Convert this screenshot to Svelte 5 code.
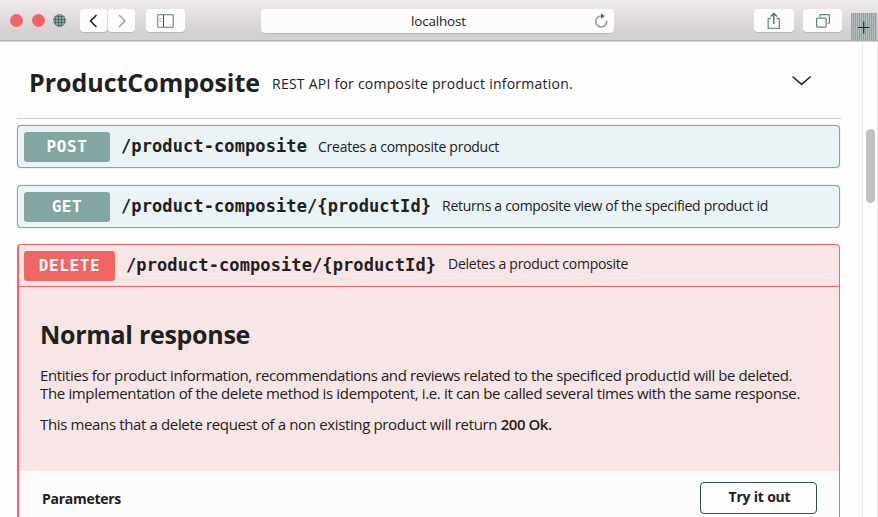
<script>
  const operations = [
    { method: 'POST', path: '/product-composite', summary: 'Creates a composite product' },
    { method: 'GET', path: '/product-composite/{productId}', summary: 'Returns a composite view of the specified product id' }
  ];
</script>

<div class="window">
  <header class="toolbar">
    <div class="lights">
      <i></i><i></i><i class="zoom"></i>
    </div>
    <div class="nav">
      <button aria-label="Back">
        <svg width="27" height="24" viewBox="0 0 27 24"><path d="M16.5 6 L10.5 12 L16.5 18" stroke="#1e2323" stroke-width="1.6" /></svg>
      </button>
      <button aria-label="Forward">
        <svg width="27" height="24" viewBox="0 0 27 24"><path d="M11 6 L17 12 L11 18" stroke="#9ca8a7" stroke-width="1.5" /></svg>
      </button>
    </div>
    <button class="sidebar" aria-label="Sidebar">
      <svg width="39" height="24" viewBox="0 0 39 24" stroke="#769b98">
        <rect x="11.7" y="5.7" width="15.6" height="12.6" rx="1" stroke-width="1.3" />
        <path d="M17.5 6 V18" stroke="#405553" />
        <path d="M13.5 9.5 H15.5 M13.5 12 H15.5" stroke="#a99fa3" />
      </svg>
    </button>
    <div class="address">
      <span>localhost</span>
      <svg width="15" height="16" viewBox="0 0 15 16">
        <path d="M12.6 7.5 A5.5 5.5 0 1 1 7.5 3" stroke="#7fa4a1" stroke-width="1.5" />
        <path d="M7 0.5 L10.7 3 L7 5.7 Z" fill="#466461" stroke="none" />
      </svg>
    </div>
    <button class="share" aria-label="Share">
      <svg width="40" height="24" viewBox="0 0 40 24" stroke="#6f9390" stroke-width="1.3">
        <path d="M17 9.5 H14.2 V19.3 H25.4 V9.5 H22.5" />
        <path d="M19.8 15 V4.5 M16.7 7.5 L19.8 4.4 L22.9 7.5" stroke="#4b6663" />
      </svg>
    </button>
    <button class="tabs" aria-label="Show tabs">
      <svg width="39" height="24" viewBox="0 0 39 24" stroke="#5f817e" stroke-width="1.2">
        <rect x="13.6" y="9.2" width="9.6" height="9" rx="1" />
        <path d="M17 7.8 V6.3 Q17 5.6 17.7 5.6 H25.6 Q26.4 5.6 26.4 6.4 V13.7 Q26.4 14.5 24.6 14.5" />
      </svg>
    </button>
    <button class="new-tab" aria-label="New tab">
      <svg width="26" height="27" viewBox="0 0 26 27"><path d="M7 14.5 H18.5 M12.7 8.5 V20.5" stroke="#1e2a29" stroke-width="1.2" /></svg>
    </button>
  </header>

  <div class="viewport">
    <main>
      <div class="tag">
        <h1>ProductComposite</h1>
        <p>REST API for composite product information.</p>
        <svg width="22" height="12" viewBox="0 0 22 12"><path d="M1.5 1.5 L10.6 9.4 L19.7 1.5" stroke="#202b2a" stroke-width="1.6" /></svg>
      </div>

      {#each operations as op}
        <section class="operation">
          <div class="summary">
            <b class="method">{op.method}</b>
            <code>{op.path}</code>
            <span class={op.method.toLowerCase()}>{op.summary}</span>
          </div>
        </section>
      {/each}

      <section class="operation danger">
        <div class="summary">
          <b class="method">DELETE</b>
          <code>{'/product-composite/{productId}'}</code>
          <span class="delete">Deletes a product composite</span>
        </div>
        <div class="description">
          <h2>Normal response</h2>
          <p>
            <span class="first">Entities for product information, recommendations and reviews related to the specificed productId will be deleted.</span><br />
            <span class="second">The implementation of the delete method is idempotent, i.e. it can be called several times with the same response.</span>
          </p>
          <p>This means that a delete request of a non existing product will return <strong>200 Ok.</strong></p>
        </div>
        <div class="parameters">
          <h3>Parameters</h3>
          <button>Try it out</button>
        </div>
      </section>
    </main>
    <aside><div class="thumb"></div></aside>
  </div>
</div>

<style>
  * { box-sizing: border-box; margin: 0; }
  button { border: 0; padding: 0; font: inherit; color: inherit; background: #fdfdfd; }
  svg { display: block; fill: none; flex: none; }
  .window {
    height: 517px; overflow: hidden; display: flex; flex-direction: column;
    background: #fdfdfd; color: #1f2020; font-family: "Open Sans", "Noto Sans", sans-serif;
    white-space: nowrap;
  }
  .toolbar {
    height: 42px; flex: none; display: flex; align-items: flex-start; padding: 9px 0 0 10px;
    background: linear-gradient(#efebec, #d5d1d3 78%);
    border-bottom: 1px solid #d5d1d3; box-shadow: inset 0 -1px #a6b3b2;
  }
  .lights { display: flex; gap: 8.5px; padding-top: 5px; width: 70px; }
  .lights i { width: 13px; height: 13px; border-radius: 50%; background: #f26563; }
  .lights .zoom {
    background: #83a5a2 radial-gradient(circle, #263432 0.8px, transparent 1.1px) 0 0 / 3px 3px;
    border: 1px solid #6e918e;
  }
  .toolbar > button, .nav button, .address {
    height: 23px; border-radius: 4px; box-shadow: 0 1px #b8b9b9; background: #fcfcfc;
  }
  .nav { display: flex; gap: 1px; margin-right: 11px; }
  .nav button { width: 27px; }
  .toolbar .sidebar { width: 39px; margin-right: 76px; }
  .address {
    width: 353px; display: flex; align-items: center; padding-right: 5px; margin-right: 140px;
    height: 24px; font-size: 13.5px;
  }
  .address span { flex: 1; text-align: center; letter-spacing: -0.2px; padding-left: 22px; }
  .toolbar .share { width: 40px; margin-right: 9px; }
  .toolbar .tabs { width: 39px; margin-right: 9px; }
  .toolbar .new-tab {
    width: 26px; height: 27px; margin-top: 4px; border-radius: 0; box-shadow: none;
    background: repeating-linear-gradient(90deg, #86a7a4 0 1px, #b3bfbe 1px 2px);
  }
  .viewport { flex: 1; min-height: 0; display: flex; }
  main { width: 862px; padding: 0 21px 0 17px; display: flex; flex-direction: column; gap: 17px; }
  .tag {
    height: 77px; flex: none; display: flex; align-items: center; padding: 4px 28px 0 12px;
    border-bottom: 1px solid #cfcacc; margin-bottom: -11px;
  }
  .tag h1 { width: 243px; font-size: 25px; line-height: 34px; letter-spacing: -0.03px; }
  .tag p { flex: 1; font-size: 14px; letter-spacing: 0.24px; padding-top: 2px; }
  .tag svg { margin-top: -2px; }
  .operation {
    height: 43px; flex: none; width: 823px; border: 1px solid #84a5a2; border-radius: 4px;
    background: #eaf3f5; box-shadow: 0 0 1px #84a5a2;
  }
  .summary { height: 41px; display: flex; align-items: center; padding-left: 6px; }
  .method {
    width: 86px; height: 30px; border-radius: 3px; text-align: center;
    background: #84a6a3; color: #fdfdfd; font: 700 16px/30px "DejaVu Sans Mono", monospace; letter-spacing: 0.6px;
  }
  code {
    font: 700 17px/24px "DejaVu Sans Mono", monospace; letter-spacing: 0.1px;
    margin: 0 11px 2px;
  }
  .summary span { font-size: 14px; line-height: 20px; letter-spacing: -0.26px; }
  .summary .get { letter-spacing: -0.3px; padding-bottom: 2px; }
  .danger {
    height: 290px; margin-top: -1px; border-color: #f26563; border-left-width: 2px;
    background: #f8e6e6; box-shadow: none;
  }
  .danger .summary { height: 42px; padding-left: 5px; border-bottom: 1px solid #f26563; }
  .danger .method { width: 91px; background: #f26563; }
  .summary .delete { letter-spacing: -0.27px; padding-bottom: 3px; margin-left: 1px; }
  .description { height: 184px; padding: 30px 21px 0; font-size: 15px; line-height: 18px; letter-spacing: -0.36px; }
  h2 { font-size: 25px; line-height: 34px; letter-spacing: -0.29px; margin-bottom: 15px; }
  .description p { margin-bottom: 13px; }
  .first { letter-spacing: -0.404px; }
  .second { letter-spacing: -0.349px; }
  strong { font-weight: 600; letter-spacing: -0.45px; }
  .parameters {
    height: 62px; padding: 11px 22px 0 23px; display: flex; align-items: flex-start; justify-content: space-between;
    background: #fcfbfb;
  }
  h3 { font-size: 14px; line-height: 33px; letter-spacing: -0.27px; }
  .parameters button {
    width: 117px; height: 32px; border: 1.5px solid #34504d; border-radius: 4px;
    font-size: 14px; font-weight: 700; letter-spacing: -0.2px; line-height: 26px; padding: 0 0 3px 2px; background: #fdfdfd;
  }
  aside { width: 16px; border-left: 1px solid #e6eceb; border-right: 1px solid #e9e9ea; padding: 87px 0 0 3px; }
  .thumb {
    width: 9px; height: 74px; border-radius: 5px;
    background: #cfcbcd radial-gradient(circle, #8aa09e 0.4px, transparent 0.8px) 0 0 / 2px 2px;
  }
</style>
